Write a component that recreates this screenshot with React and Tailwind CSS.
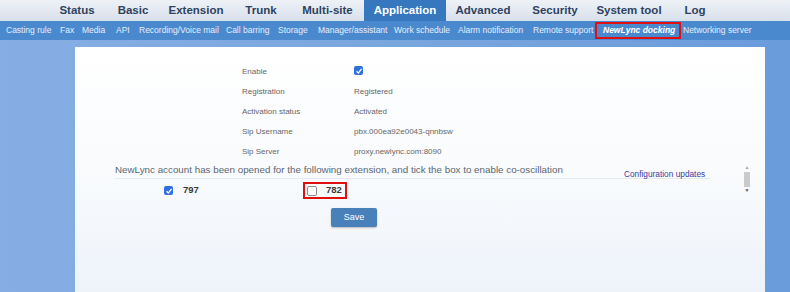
import { Fragment } from 'react'

const tabs = [
  { name: 'Status', w: 'w-[56px]' },
  { name: 'Basic', w: 'w-[56px]' },
  { name: 'Extension', w: 'w-[70px]' },
  { name: 'Trunk', w: 'w-[60px]' },
  { name: 'Multi-site', w: 'w-[73px]' },
  { name: 'Application', w: 'w-[82px]', active: true },
  { name: 'Advanced', w: 'w-[74px]' },
  { name: 'Security', w: 'w-[70px]' },
  { name: 'System tool', w: 'w-[78px]' },
  { name: 'Log', w: 'w-[54px]' },
]

// fixed slots so each item starts where the reference has it
const subs = [
  { name: 'Casting rule', w: 'w-[54px]' },
  { name: 'Fax', w: 'w-[22px]' },
  { name: 'Media', w: 'w-[34px]' },
  { name: 'API', w: 'w-[23px]' },
  { name: 'Recording/Voice mail', w: 'w-[87px]' },
  { name: 'Call barring', w: 'w-[52px]' },
  { name: 'Storage', w: 'w-[40px]' },
  { name: 'Manager/assistant', w: 'w-[76px]' },
  { name: 'Work schedule', w: 'w-[64px]' },
  { name: 'Alarm notification', w: 'w-[75px]' },
  { name: 'Remote support', w: 'w-[62px]' },
]

const rows = [
  ['Registration', 'Registered'],
  ['Activation status', 'Activated'],
  ['Sip Username', 'pbx.000ea92e0043-qnnbsw'],
  ['Sip Server', 'proxy.newlync.com:8090'],
]

function Check({ on }) {
  return on ? (
    <span className="w-[9px] h-[9px] rounded-[2px] bg-[#2f6fe0] flex items-center justify-center shrink-0">
      <svg width="8" height="8" viewBox="0 0 10 10">
        <path d="M2 5.4 L4.2 7.6 L8.2 2.4" stroke="white" strokeWidth="1.7" fill="none" />
      </svg>
    </span>
  ) : (
    <span className="w-[10px] h-[10px] rounded-[2px] border border-[#8a8a8a] bg-white shrink-0" />
  )
}

export default function App() {
  return (
    <div className="w-[790px] h-[292px] overflow-hidden flex flex-col" style={{ fontFamily: '"Liberation Sans", Arial, sans-serif' }}>
      {/* top tabs */}
      <div className="h-[21px] flex items-stretch pl-[49px] bg-gradient-to-b from-[#eef2f7] to-[#d8e0eb]">
        {tabs.map((t) => (
          <div key={t.name}
            className={`${t.w} flex items-center justify-center whitespace-nowrap text-[11.5px] font-bold ${t.active ? 'bg-[#3777bd] text-white' : 'text-[#2f4260]'}`}>
            {t.name}
          </div>
        ))}
      </div>

      {/* sub nav */}
      <div className="h-[19px] flex items-center bg-[#4b89cf] text-[8.5px] text-[#e6eef9] pl-[6px]">
        {subs.map((s) => (
          <span key={s.name} className={`${s.w} shrink-0 whitespace-nowrap`}>{s.name}</span>
        ))}
        <span className="w-[86px] h-[17px] shrink-0 border-2 border-[#e01010] pl-[6px] flex items-center font-bold italic text-white whitespace-nowrap">
          NewLync docking
        </span>
        <span className="ml-[2px] whitespace-nowrap">Networking server</span>
      </div>

      {/* body */}
      <div className="flex-1 flex pt-[7px] bg-gradient-to-r from-[#86aee4] via-[#7aa6de] to-[#6a9bdb]">
        <div className="ml-[75px] w-[690px] bg-gradient-to-b from-white via-[#f9fbfd] to-[#eef3fa]">
          <div className="grid grid-cols-[112px_1fr] auto-rows-[20px] items-center pl-[167px] pt-[15px] text-[8px] text-[#666]">
            <span>Enable</span>
            <span className="flex -mt-[3px]"><Check on /></span>
            {rows.map(([l, v]) => (
              <Fragment key={l}>
                <span>{l}</span>
                <span>{v}</span>
              </Fragment>
            ))}
          </div>

          <div className="flex pl-[40px]">
            <div className="w-[620px] flex flex-col">
              <div className="w-[595px] h-[17px] flex items-center border-b border-[#e6eaf0]">
                <span className="w-[509px] shrink-0 whitespace-nowrap text-[9.8px] text-[#5a6670]">
                  NewLync account has been opened for the following extension, and tick the box to enable co-oscillation
                </span>
                <span className="mt-[8px] whitespace-nowrap text-[8.3px] text-[#3c3ca0]">Configuration updates</span>
              </div>
              <div className="mt-[3px] h-[17px] flex items-center">
                <span className="ml-[49px] w-[139px] flex items-center gap-[10px]">
                  <Check on />
                  <span className="text-[9.5px] font-bold text-[#3a3a3a]">797</span>
                </span>
                <span className="w-[44px] h-[17px] border-2 border-[#e01010] flex items-center pl-[2px] gap-[9px]">
                  <Check />
                  <span className="text-[9.5px] font-bold text-[#3a3a3a]">782</span>
                </span>
              </div>
            </div>
            <div className="ml-[8px] mt-[3px] w-[8px] h-[28px] flex flex-col items-center justify-between">
              <span className="text-[5px] leading-[5px] text-[#aaa]">▲</span>
              <span className="w-[6px] h-[15px] bg-[#cacaca]" />
              <span className="text-[5px] leading-[5px] text-[#555]">▼</span>
            </div>
          </div>

          <div className="mt-[4px] ml-[256px]">
            <button className="w-[46px] h-[19px] rounded-[2px] bg-[#4a80ba] text-white text-[9px] shadow-[0_1px_2px_rgba(0,0,0,0.25)]">
              Save
            </button>
          </div>
        </div>
      </div>
    </div>
  )
}
